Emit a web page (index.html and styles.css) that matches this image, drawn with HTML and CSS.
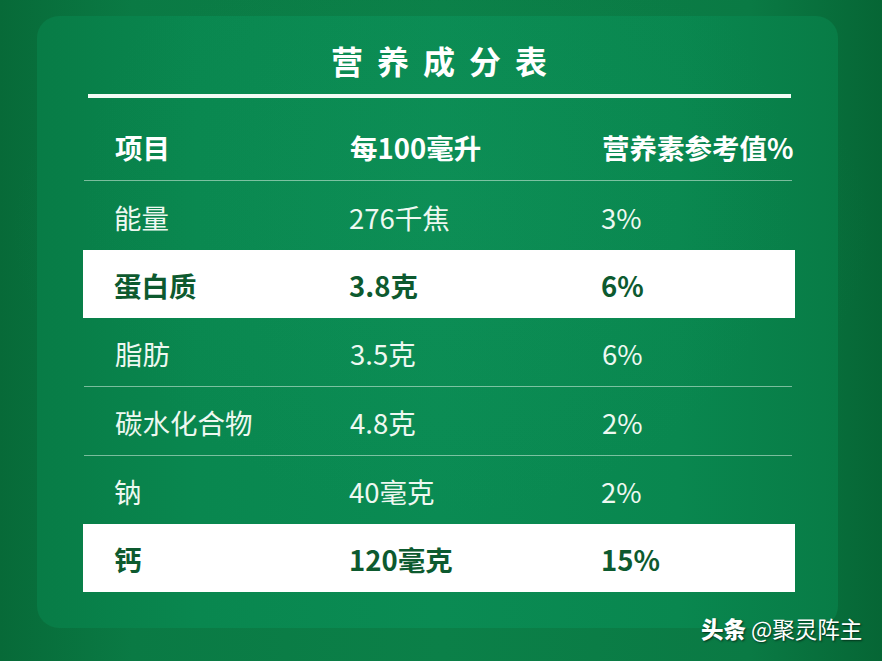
FILE: index.html
```html
<!DOCTYPE html>
<html lang="zh">
<head>
<meta charset="utf-8">
<title>营养成分表</title>
<link rel="stylesheet" href="styles.css">
</head>
<body>
<div class="page">
  <div class="card">
    <h1 class="title">营养成分表</h1>
    <div class="rule"></div>
    <div class="table">
      <div class="row head sep"><span>项目</span><span>每100毫升</span><span>营养素参考值%</span></div>
      <div class="row"><span>能量</span><span>276千焦</span><span>3%</span></div>
      <div class="row hl"><span>蛋白质</span><span>3.8克</span><span>6%</span></div>
      <div class="row sep"><span>脂肪</span><span>3.5克</span><span>6%</span></div>
      <div class="row sep"><span>碳水化合物</span><span>4.8克</span><span>2%</span></div>
      <div class="row short"><span>钠</span><span>40毫克</span><span>2%</span></div>
      <div class="row hl"><span>钙</span><span>120毫克</span><span>15%</span></div>
    </div>
  </div>
  <div class="mark"><b>头条</b> @聚灵阵主</div>
</div>
</body>
</html>
```
FILE: styles.css
```css
* { box-sizing: border-box; }
html, body { margin: 0; padding: 0; }
body {
  width: 882px;
  height: 661px;
  overflow: hidden;
  font-family: "Noto Sans CJK SC", "Noto Sans", sans-serif;
}
.page {
  position: relative;
  width: 882px;
  height: 661px;
  padding: 16px 44px 0 37px;
  background:
    radial-gradient(ellipse 70% 60% at 50% 35%, rgba(20,150,90,0.25), rgba(0,0,0,0) 70%),
    linear-gradient(90deg, #076a38 0%, #0a7a44 15%, #0b8048 50%, #0a7a44 85%, #066635 100%);
}
.card {
  width: 801px;
  height: 612px;
  border-radius: 22px;
  padding: 0 43px 0 46px;
  background:
    radial-gradient(ellipse 60% 70% at 50% 30%, rgba(30,160,100,0.15), rgba(0,0,0,0) 75%),
    linear-gradient(90deg, #087c46 0%, #09874f 20%, #0a8b53 50%, #09874f 80%, #087c46 100%);
  display: flex;
  flex-direction: column;
}
.title {
  margin: 24px 0 0 0;
  height: 40px;
  line-height: 40px;
  text-align: center;
  font-size: 32px;
  font-weight: 700;
  letter-spacing: 14px;
  padding-left: 14px;
  color: #ffffff;
}
.rule {
  align-self: center;
  width: 703px;
  height: 4px;
  margin-top: 14px;
  background: #f4fbf6;
}
.table {
  margin-top: 18px;
  display: flex;
  flex-direction: column;
}
.row {
  display: grid;
  grid-template-columns: 235px 252px 1fr;
  align-items: center;
  height: 69px;
  padding-left: 31px;
  padding-top: 2px;
  font-size: 27.5px;
  color: #eef8f1;
  white-space: nowrap;
}
.row.head {
  height: 64px;
  font-weight: 700;
  font-size: 27.5px;
  color: #ffffff;
  padding-top: 0;
  padding-bottom: 3px;
}
.row.sep {
  border-bottom: 1.5px solid rgba(235, 250, 240, 0.5);
  margin-left: 1px;
  margin-right: 3px;
}
.row.sep.head { height: 65px; }
.row.short { height: 68px; }
.row.hl {
  height: 68px;
  background: #ffffff;
  color: #0d5a2f;
  font-weight: 700;
}
.mark {
  position: absolute;
  left: 701px;
  top: 613px;
  font-size: 22.5px;
  line-height: 30px;
  color: #ffffff;
  text-shadow: 1px 1px 2px rgba(0,0,0,0.6);
  white-space: nowrap;
}
.mark b { font-weight: 900; }
```
